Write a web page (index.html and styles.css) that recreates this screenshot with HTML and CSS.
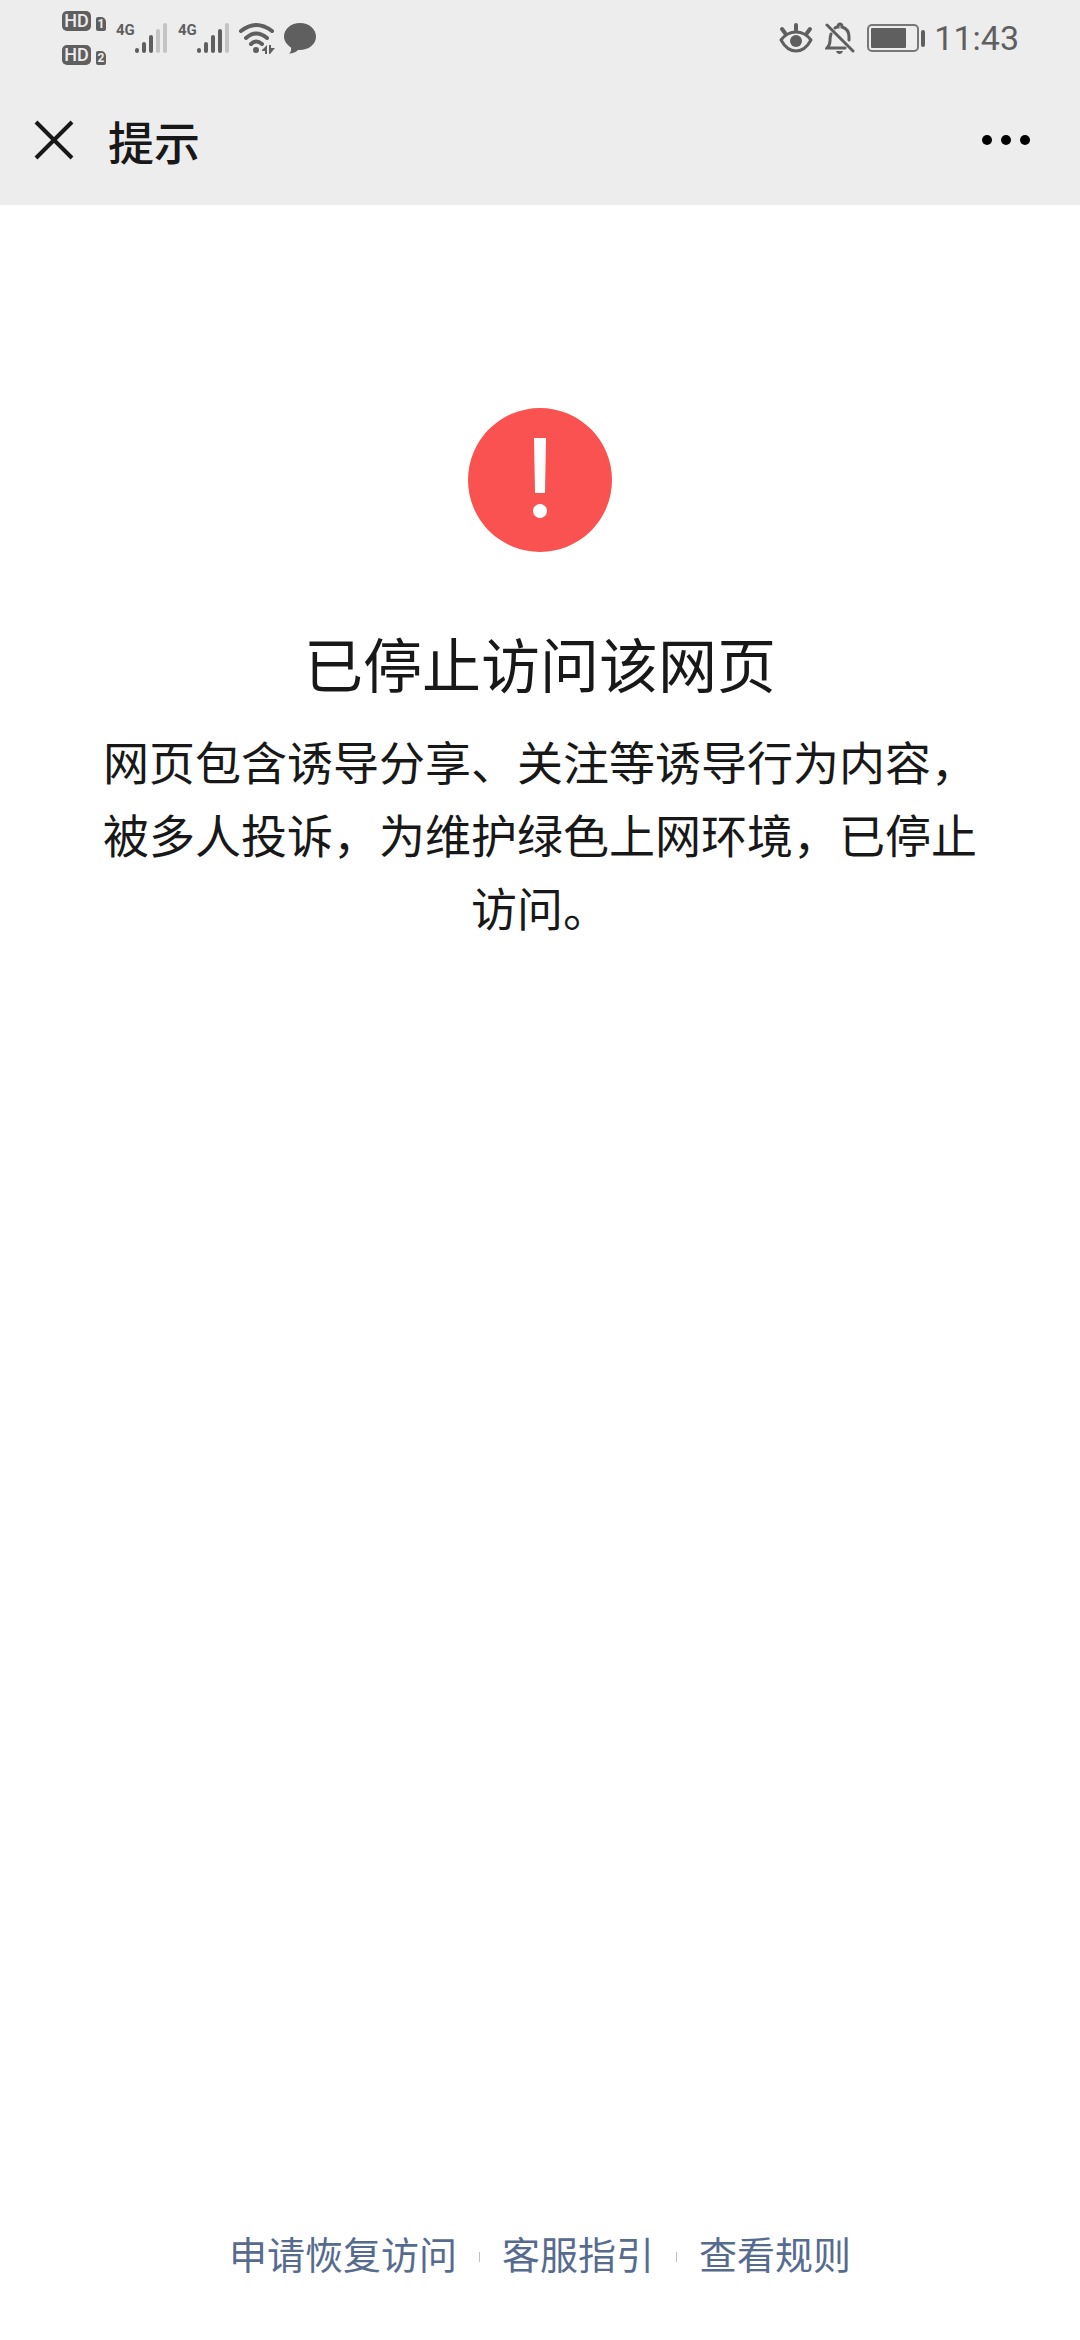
FILE: index.html
```
<!DOCTYPE html>
<html lang="zh-CN">

<head>
    <meta charset="UTF-8">
    <meta name="viewport" content="width=device-width, initial-scale=1.0">
    <title>提示</title>
    <link rel="stylesheet" href="styles.css">
</head>

<body>
    <header class="top">
        <div class="status">
            <div class="status-left">
                <div class="sims">
                    <div class="sim">
                        <span class="hd">HD</span>
                        <span class="slot">1</span>
                    </div>
                    <div class="sim">
                        <span class="hd">HD</span>
                        <span class="slot">2</span>
                    </div>
                </div>
                <div class="signal">
                    <span class="net">4G</span>
                    <svg width="33" height="32" viewBox="0 0 33 32" stroke-width="4" stroke-linecap="round">
                        <path d="M2 28v1M9 22v7M16 15v14" stroke="#5f5f5f" />
                        <path d="M23 9v20M30 3v26" stroke="#c4c4c4" />
                    </svg>
                </div>
                <div class="signal">
                    <span class="net">4G</span>
                    <svg width="33" height="32" viewBox="0 0 33 32" stroke-width="4" stroke-linecap="round">
                        <path d="M2 28v1M9 22v7M16 15v14M23 9v20" stroke="#5f5f5f" />
                        <path d="M30 3v26" stroke="#c4c4c4" />
                    </svg>
                </div>
                <div class="net-icons">
                    <svg width="38" height="32" viewBox="0 0 38 32" fill="none" stroke="#5f5f5f" stroke-width="4" stroke-linecap="round">
                        <path d="M3 9Q18 -3 34 9M8 16Q18 7 29 16M13 22Q18 17 24 22" />
                        <circle cx="18" cy="28" r="3" fill="#5f5f5f" stroke="none" />
                        <path d="M24 28l5-5v9h-2v-3h-3zM31 23h2v3h4l-5 6h-1z" fill="#5f5f5f" stroke="none" />
                    </svg>
                    <svg width="32" height="32" viewBox="0 0 32 32" fill="#5f5f5f">
                        <path d="M16 1C7 1 0 7 0 14.500C0 19 3 23 7 25.500C7.500 28 7 30 5 31.500C9 31.500 12 30 14 28C24 28.500 32 23 32 14.500C32 7 25 1 16 1z" />
                    </svg>
                </div>
            </div>
            <div class="status-right">
                <svg width="34" height="32" viewBox="0 0 34 32" fill="none" stroke="#5f5f5f" stroke-width="4" stroke-linecap="round">
                    <path d="M2 18Q8 10 17 10T32 18Q26 29 17 29T2 18z" stroke-width="3" stroke-linejoin="round" />
                    <circle cx="17" cy="19" r="6" fill="#5f5f5f" stroke="none" />
                    <path d="M17 3v5M3 7l3 4M31 7l-3 4" />
                </svg>
                <svg width="30" height="32" viewBox="0 0 30 32" fill="none" stroke="#5f5f5f" stroke-width="3" stroke-linecap="round">
                    <path d="M2 3l26 26M6 12Q5 15 5 19Q5 23 2 26H20M10 6Q11 5 13 5Q13 2 15 2T17 5Q24 7 24 15V18" />
                    <path d="M11 29h7q-1 3-3.500 3T11 29z" fill="#5f5f5f" stroke="none" />
                </svg>
                <svg width="59" height="32" viewBox="0 0 59 32" fill="#5f5f5f">
                    <rect x="1" y="3" width="50" height="26" rx="4" fill="none" stroke="#777" stroke-width="2" />
                    <rect x="4" y="6" width="35" height="20" rx="1" />
                    <rect x="54" y="8" width="4" height="17" rx="2" />
                </svg>
                <span class="time">11:43</span>
            </div>
        </div>
        <div class="nav">
            <button class="icon-btn" aria-label="关闭">
                <svg width="40" height="40" viewBox="0 0 40 40" stroke="#181818" stroke-width="4">
                    <path d="M2 2L38 38M38 2L2 38" />
                </svg>
            </button>
            <h1>提示</h1>
            <button class="icon-btn more" aria-label="更多">
                <svg width="50" height="12" viewBox="0 0 50 12">
                    <circle cx="6" cy="6" r="5" />
                    <circle cx="25" cy="6" r="5" />
                    <circle cx="44" cy="6" r="5" />
                </svg>
            </button>
        </div>
    </header>

    <main>
        <svg class="warn" width="144" height="144" viewBox="0 0 144 144">
            <circle cx="72" cy="72" r="72" fill="#fa5151" />
            <path d="M66 30h12l-1 55H67z" fill="#fff" />
            <circle cx="72" cy="103" r="7" fill="#fff" />
        </svg>
        <h2>已停止访问该网页</h2>
        <p>网页包含诱导分享、关注等诱导行为内容，被多人投诉，为维护绿色上网环境，已停止访问。</p>
    </main>

    <footer>
        <a href="#">申请恢复访问</a>
        <span class="divider"></span>
        <a href="#">客服指引</a>
        <span class="divider"></span>
        <a href="#">查看规则</a>
    </footer>
</body>

</html>
```

FILE: styles.css
```
* {
    box-sizing: border-box;
}

body {
    margin: 0;
    min-height: 100vh;
    display: flex;
    flex-direction: column;
    background-color: #fff;
    color: #181818;
    font-family: "Noto Sans CJK SC", sans-serif;
}

svg {
    display: block;
    flex-shrink: 0;
}

.top {
    background-color: #ededed;
}

.status {
    height: 75px;
    padding: 0 61px 0 62px;
    display: flex;
    justify-content: space-between;
    align-items: center;
    color: #5f5f5f;
    font-family: Roboto, sans-serif;
}

.status-left,
.status-right,
.net-icons {
    display: flex;
    align-items: center;
}

.status-left {
    gap: 10px;
}

.status-right {
    gap: 12px;
}

.net-icons {
    gap: 8px;
    margin-left: -2px;
}

.sims {
    display: flex;
    flex-direction: column;
    gap: 14px;
}

.sim {
    display: flex;
    align-items: flex-end;
    gap: 5px;
}

.hd,
.slot {
    background-color: #5f5f5f;
    color: #ededed;
    text-align: center;
}

.hd {
    width: 29px;
    height: 20px;
    border-radius: 5px;
    font-size: 18px;
    line-height: 20px;
    font-weight: 500;
}

.slot {
    width: 10px;
    height: 14px;
    border-radius: 2px 5px 2px 2px;
    font-size: 12px;
    line-height: 14px;
    font-weight: bold;
}

.signal {
    display: flex;
    align-items: flex-start;
}

.net {
    width: 19px;
    font-family: "Liberation Sans Narrow", Roboto, sans-serif;
    font-size: 15px;
    line-height: 16px;
    font-weight: bold;
}

.time {
    margin-left: -4px;
    font-size: 34px;
    line-height: 40px;
}

.nav {
    height: 130px;
    padding: 0 49px 0 34px;
    display: flex;
    align-items: center;
}

.icon-btn {
    padding: 0;
    border: none;
    background: none;
    cursor: pointer;
}

.more {
    margin-left: auto;
}

h1 {
    margin: 0 0 0 34px;
    font-size: 46px;
    line-height: 64px;
    font-weight: 500;
}

main {
    flex: 1;
    padding: 203px 96px 0;
    text-align: center;
}

.warn {
    margin: 0 auto 73px;
}

h2 {
    margin: 0 0 23px;
    font-size: 59px;
    line-height: 76px;
    font-weight: normal;
}

p {
    margin: 0;
    font-size: 46px;
    line-height: 73px;
}

footer {
    padding-bottom: 59px;
    display: flex;
    justify-content: center;
    align-items: center;
    gap: 22px;
}

footer a {
    color: #576b8f;
    font-size: 38px;
    line-height: 56px;
    text-decoration: none;
}

.divider {
    width: 1px;
    height: 10px;
    margin-top: 8px;
    background-color: #c0c0c0;
}
```
